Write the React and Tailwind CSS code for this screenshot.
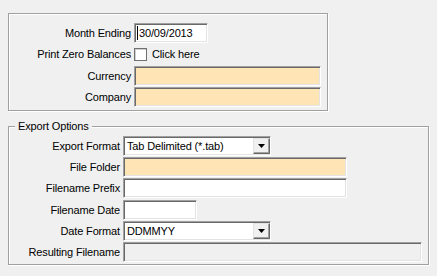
import React from 'react';

const sunken = 'border border-t-[#a0a0a0] border-l-[#a0a0a0] border-b-white border-r-white shadow-[inset_1px_1px_0_#696969,inset_-1px_-1px_0_#e3e3e3]';
const groupBox = 'border border-[#a0a0a0] shadow-[1px_1px_0_#fff,inset_1px_1px_0_#fff]';

const Field = ({ className = '', children }) => (
  <div className={`h-[20px] ${sunken} flex items-center px-[2px] ${className}`}>{children}</div>
);

const Label = ({ w, children }) => (
  <div className={`${w} shrink-0 text-right pr-[3px] text-black`}>{children}</div>
);

const DropArrow = () => (
  <div className="ml-auto h-[16px] w-[17px] border border-t-[#e3e3e3] border-l-[#e3e3e3] border-b-[#696969] border-r-[#696969] shadow-[inset_-1px_-1px_0_#a0a0a0] bg-[#f0f0f0] flex items-center justify-center">
    <svg width="7" height="4" viewBox="0 0 7 4">
      <path d="M0 0h7L3.5 4z" fill="#000" />
    </svg>
  </div>
);

const Select = ({ value }) => (
  <Field className="w-[148px] bg-white pr-0">
    <span className="truncate pl-[1px]">{value}</span>
    <DropArrow />
  </Field>
);

export default function App() {
  return (
    <div className="w-[437px] h-[276px] bg-[#f0f0f0] font-['Liberation_Sans',Arial,sans-serif] text-[11px] tracking-[-0.15px] leading-none text-black overflow-hidden pt-[13px] pl-[8px]">
      {/* Top group */}
      <div className={`w-[320px] h-[98px] ${groupBox} pt-[9px] flex flex-col`}>
        <div className="flex items-center h-[20px]">
          <Label w="w-[125px]">Month Ending</Label>
          <Field className="w-[74px] bg-white">
            <span className="w-px h-[14px] bg-black mr-[1px]" />
            <span>30/09/2013</span>
          </Field>
        </div>
        <div className="flex items-center h-[22px]">
          <Label w="w-[125px]">Print Zero Balances</Label>
          <div className="w-[13px] h-[13px] bg-white border border-[#707070] shadow-[inset_1px_1px_0_#d0d0d0]" />
          <span className="ml-[5px]">Click here</span>
        </div>
        <div className="flex items-center h-[20px] mt-[1px]">
          <Label w="w-[125px]">Currency</Label>
          <Field className="w-[187px] bg-[#ffe4b5]" />
        </div>
        <div className="flex items-center h-[20px] mt-[1px]">
          <Label w="w-[125px]">Company</Label>
          <Field className="w-[187px] bg-[#ffe4b5]" />
        </div>
      </div>

      {/* Export Options */}
      <div className={`relative mt-[15px] w-[421px] h-[139px] ${groupBox} pt-[9px] flex flex-col gap-[1px]`}>
        <span className="absolute -top-[6px] left-[6px] px-[3px] bg-[#f0f0f0]">Export Options</span>
        <div className="flex items-center h-[20px]">
          <Label w="w-[114px]">Export Format</Label>
          <Select value="Tab Delimited (*.tab)" />
        </div>
        <div className="flex items-center h-[20px]">
          <Label w="w-[114px]">File Folder</Label>
          <Field className="w-[224px] bg-[#ffe4b5]" />
        </div>
        <div className="flex items-center h-[20px]">
          <Label w="w-[114px]">Filename Prefix</Label>
          <Field className="w-[224px] bg-white" />
        </div>
        <div className="flex items-center h-[20px] mt-[1px]">
          <Label w="w-[114px]">Filename Date</Label>
          <Field className="w-[74px] bg-white" />
        </div>
        <div className="flex items-center h-[20px]">
          <Label w="w-[114px]">Date Format</Label>
          <Select value="DDMMYY" />
        </div>
        <div className="flex items-center h-[20px]">
          <Label w="w-[114px]">Resulting Filename</Label>
          <Field className="w-[299px] bg-[#f0f0f0]" />
        </div>
      </div>
    </div>
  );
}
